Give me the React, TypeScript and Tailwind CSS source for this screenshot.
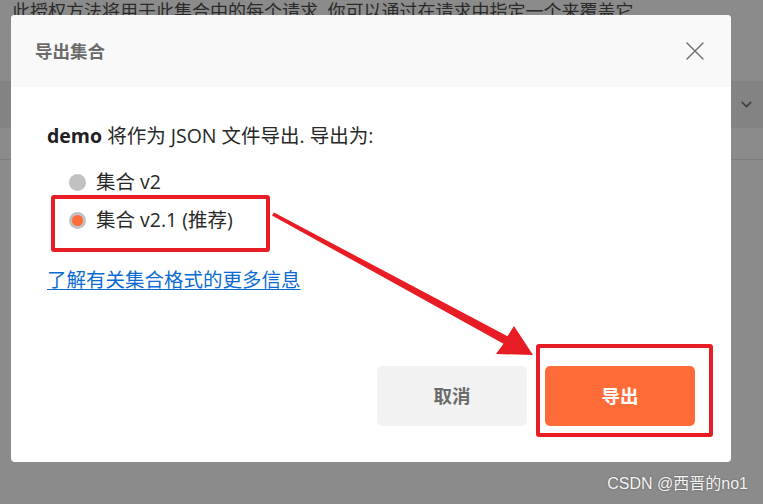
import React from 'react';
import { X, ChevronDown } from 'lucide-react';

const FONT = { fontFamily: '"Open Sans", "Noto Sans CJK SC", sans-serif' };

export default function App() {
  return (
    <div className="relative w-[763px] h-[504px] overflow-hidden bg-[#8b8b8b]" style={FONT}>
      {/* page behind the overlay */}
      <div className="flex flex-col">
        <div className="pl-3 pt-[1px] text-[18px] leading-[20px] text-[#2a2a2a] whitespace-nowrap">
          此授权方法将用于此集合中的每个请求. 你可以通过在请求中指定一个来覆盖它
        </div>
        <div className="mt-[60px] h-[47px] bg-[#838383] flex items-center justify-end pr-[8px]">
          <ChevronDown className="w-[17px] h-[17px] text-[#3d3d3d]" strokeWidth={2} />
        </div>
        <div className="mt-[31px] h-px bg-[#7c7c7c]" />
      </div>

      {/* dialog */}
      <div className="absolute left-[11px] top-[15px] w-[720px] h-[447px] bg-white rounded-[4px] overflow-hidden flex flex-col">
        <div className="h-[72px] bg-[#f9f9f9] flex items-center justify-between pl-6 pr-[20px]">
          <h2 className="text-[17.5px] font-bold text-[#6b6b6b]">导出集合</h2>
          <X className="w-[32px] h-[32px] text-[#707070]" strokeWidth={1} />
        </div>
        <div className="flex-1 flex flex-col px-9 pt-[36px] pb-9">
          <p className="text-[19.5px] leading-[26px] text-[#282828]">
            <span className="font-bold text-[#212121]">demo</span> 将作为 JSON 文件导出. 导出为:
          </p>
          <div className="mt-[20px] flex flex-col gap-[12px] pl-[22px]">
            <label className="flex items-center gap-[10px] text-[19.5px] leading-[26px] text-[#282828]">
              <span className="w-[17px] h-[17px] rounded-full bg-[#c1c1c1]" />
              集合 v2
            </label>
            <label className="flex items-center gap-[10px] text-[19.5px] leading-[26px] text-[#282828]">
              <span className="w-[17px] h-[17px] rounded-full bg-[#c1c1c1] flex items-center justify-center">
                <span className="w-[11px] h-[11px] rounded-full bg-[#ff6c37]" />
              </span>
              集合 v2.1 (推荐)
            </label>
          </div>
          <a className="mt-[34px] text-[19.5px] leading-[26px] text-[#0b6bd3] underline underline-offset-2 self-start">
            了解有关集合格式的更多信息
          </a>
          <div className="mt-auto flex justify-end gap-[18px]">
            <button className="w-[150px] h-[60px] rounded-[5px] bg-[#f2f2f2] text-[18.5px] font-bold text-[#6b6b6b]">取消</button>
            <button className="w-[150px] h-[60px] rounded-[5px] bg-[#ff6c37] text-[18.5px] font-bold text-white">导出</button>
          </div>
        </div>
      </div>

      {/* annotations */}
      <div className="absolute left-[51px] top-[195px] w-[219px] h-[57px] border-4 border-[#e81c24] rounded-[3px]" />
      <div className="absolute left-[536px] top-[344px] w-[177px] h-[93px] border-4 border-[#e81c24] rounded-[3px]" />
      <svg className="absolute left-0 top-0" width="763" height="504" viewBox="0 0 763 504">
        <polygon
          points="274,212.5 507.5,336.3 514,326 533,355 496,354 503.5,343.7 272,215.5"
          fill="#e81c24"
        />
      </svg>

      {/* watermark */}
      <div
        className="absolute right-[15px] bottom-[8px] text-[16px] text-[#f4f4f4] [text-shadow:0_0_2px_#555]"
        style={{ fontFamily: '"Liberation Sans", "Noto Sans CJK SC", sans-serif' }}
      >
        CSDN @西晋的no1
      </div>
    </div>
  );
}
